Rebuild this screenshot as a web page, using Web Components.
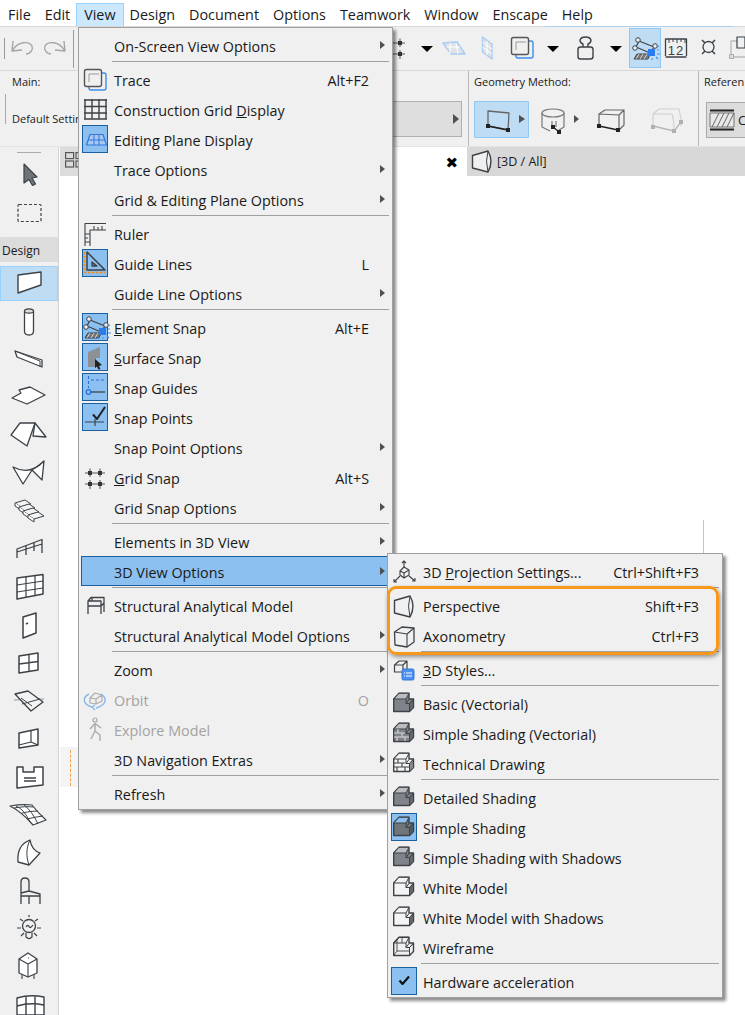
<!DOCTYPE html>
<html lang="en"><head><meta charset="utf-8"><title>View menu</title>
<style>
html,body{margin:0;height:1015px;overflow:hidden;background:#fff;font-family:"Open Sans","Noto Sans",sans-serif;color:#1a1a1a}
</style></head><body>
<app-shell>
  <menu-bar slot="menu">
    <bar-item>File</bar-item><bar-item>Edit</bar-item><bar-item open>View</bar-item><bar-item>Design</bar-item><bar-item>Document</bar-item><bar-item>Options</bar-item><bar-item>Teamwork</bar-item><bar-item>Window</bar-item><bar-item>Enscape</bar-item><bar-item>Help</bar-item>
  </menu-bar>
  <tool-bar slot="tools"></tool-bar>
  <info-bar slot="info"></info-bar>
  <tool-palette slot="palette"></tool-palette>
  <view-area slot="view"></view-area>

  <drop-menu slot="overlay" style="left:78px;top:27px;width:315px;--pl:1px;padding-top:2px">
    <menu-item arrow>On-Screen View Options</menu-item><menu-sep></menu-sep>
    <menu-item icon="trace" short="Alt+F2">Trace</menu-item>
    <menu-item icon="grid">Construction Grid <u>D</u>isplay</menu-item>
    <menu-item icon="plane" checked>Editing Plane Display</menu-item>
    <menu-item arrow>Trace Options</menu-item>
    <menu-item arrow>Grid &amp; Editing Plane Options</menu-item><menu-sep></menu-sep>
    <menu-item icon="ruler">Ruler</menu-item>
    <menu-item icon="guide" checked short="L">Guide Lines</menu-item>
    <menu-item arrow>Guide Line Options</menu-item><menu-sep></menu-sep>
    <menu-item icon="esnap" checked short="Alt+E"><u>E</u>lement Snap</menu-item>
    <menu-item icon="surface" checked><u>S</u>urface Snap</menu-item>
    <menu-item icon="guides" checked>Snap Guides</menu-item>
    <menu-item icon="points" checked>Snap Points</menu-item>
    <menu-item arrow>Snap Point Options</menu-item>
    <menu-item icon="gsnap" short="Alt+S"><u>G</u>rid Snap</menu-item>
    <menu-item arrow>Grid Snap Options</menu-item><menu-sep></menu-sep>
    <menu-item arrow>Elements in 3D View</menu-item>
    <menu-item arrow hl>3D View Options</menu-item><menu-sep></menu-sep>
    <menu-item icon="struct">Structural Analytical Model</menu-item>
    <menu-item arrow>Structural Analytical Model Options</menu-item><menu-sep></menu-sep>
    <menu-item arrow>Zoom</menu-item>
    <menu-item icon="orbit" disabled short="O">Orbit</menu-item>
    <menu-item icon="explore" disabled>Explore Model</menu-item>
    <menu-item arrow>3D Navigation Extras</menu-item><menu-sep></menu-sep>
    <menu-item arrow>Refresh</menu-item>
  </drop-menu>

  <drop-menu slot="overlay" style="left:387px;top:553px;width:336px;--pl:1px;padding-top:2px">
    <menu-item icon="proj" short="Ctrl+Shift+F3">3D <u>P</u>rojection Settings...</menu-item><menu-sep></menu-sep>
    <menu-item icon="persp" short="Shift+F3">Perspective</menu-item>
    <menu-item icon="axo" short="Ctrl+F3">Axonometry</menu-item><menu-sep></menu-sep>
    <menu-item icon="styles"><u>3</u>D Styles...</menu-item><menu-sep></menu-sep>
    <menu-item icon="s703">Basic (Vectorial)</menu-item>
    <menu-item icon="s733">Simple Shading (Vectorial)</menu-item>
    <menu-item icon="s763">Technical Drawing</menu-item><menu-sep></menu-sep>
    <menu-item icon="s797">Detailed Shading</menu-item>
    <menu-item icon="s827" checked>Simple Shading</menu-item>
    <menu-item icon="s857">Simple Shading with Shadows</menu-item>
    <menu-item icon="s887">White Model</menu-item>
    <menu-item icon="s917">White Model with Shadows</menu-item>
    <menu-item icon="s947">Wireframe</menu-item><menu-sep></menu-sep>
    <menu-item icon="hw" checked>Hardware acceleration</menu-item>
  </drop-menu>
  <focus-ring slot="overlay"></focus-ring>
</app-shell>

<script>
const DK='#3c4247';
const g=(dx,dy,c)=>`<g transform="translate(${dx} ${dy})">${c}</g>`;
const traceI=`<rect x="516" y="41" width="17" height="17" rx="2" stroke="#3b8eea" stroke-width="1.4" fill="none"/><rect x="511.5" y="37.5" width="17" height="17" rx="2" fill="#f0f0f0" stroke="#555" stroke-width="1.4"/><path d="M516,50V42H526" stroke="#999" fill="none"/>`;
const snapI=`<path d="M639,41L654,47L650,53L636,47Z" fill="none" stroke-width="1.2"/><circle cx="638" cy="40" r="2.3" fill="#e8eef4"/><circle cx="655" cy="46" r="2.3" fill="#e8eef4"/><circle cx="635" cy="48" r="2.3" fill="#e8eef4"/><path d="M634,59L637,54H650L648,59Z" fill="#777" stroke-width="1"/><path d="M636,59L639,54M640,59L643,54M644,59L647,54" stroke="#eee" stroke-width=".8"/><rect x="648" y="49" width="7" height="7" fill="#2a7cf0" stroke="none"/><path d="M657,50h2M657,54h3M656,57l2,2M652,58v2M648,58l-1,2M657,47l2,-1" stroke="#3f8ef0" stroke-width="1.1"/>`;
const gsnapI=`<path d="M90,468.500V477M90,480V489M100,468.500V477M100,480V489M85,473H95M95,473H105M85,484H105" stroke="#555" stroke-width="1"/><rect x="88" y="471" width="4" height="4" fill="#333" stroke="none"/><rect x="98" y="471" width="4" height="4" fill="#333" stroke="none"/><rect x="88" y="482" width="4" height="4" fill="#333" stroke="none"/><rect x="98" y="482" width="4" height="4" fill="#333" stroke="none"/>`;
const perspI=`<path d="M394.500,600.500L410,596Q416,606 410,617L394.500,613Z" fill="#f0f0f0" stroke-width="1.4"/><path d="M410,596Q407,606 410,617" stroke-width="1"/>`;
const shade=(c,o)=>{const y=c-11;const F=o.F||'#80848a',T=o.T||'#b9bdc1',S=o.S||'#63686d';
 return g(393,y,`<path d="M.7,7L6,1.3H16V7H20.5V15.5L16.500,19.5H.7Z" fill="${F}" stroke-width="1.4"/><path d="M.7,7L6,1.3H16L13,7Z" fill="${T}" stroke-width="1"/><path d="M13,7V11.500M16.500,19.5V11.500H13L16,7.500M16.500,11.500L20.500,7" stroke-width="1"/><path d="M16.500,11.500L20.500,7.500V15.500L16.500,19.500Z" fill="${S}" stroke-width="1"/>${o.x||''}`)};
const bricks=c=>`<path d="M1,11H12M1,15H16M5,7V11M9,11V15M4,15V19M12,15V19" stroke="${c}" stroke-width="1.1" fill="none"/>`;

const menuI={
 trace:[79,g(-427,32,traceI)],
 grid:[109,`<path d="M85,99V119M92,99V119M99,99V119M106,99V119M84,100H107M84,106.500H107M84,113H107M84,119H107" stroke-width="1.4"/>`],
 plane:[139,`<path d="M86.500,145L90,134.500H103L106.500,145Z" fill="#a8c8f0" stroke="#2f78e0" stroke-width="1.2"/><path d="M88,140H105M94,134.500V145M99,134.500V145" stroke="#2f78e0"/>`],
 ruler:[233,`<path d="M85,246V223.500H106M90,246V230H106M94,230V226M98,230V227M102,230V226M85,234H90M85,238H88M85,242H90" stroke-width="1.1"/>`],
 guide:[263,`<path d="M87,252V270H105Z" stroke-width="1.5"/><path d="M92,262V266H97Z" stroke-width="1.3" fill="#5a7fa5"/><path d="M84.500,252V272.500H105" stroke="#f28a1e" stroke-width="1.6" stroke-dasharray="2.500 1.500"/>`],
 esnap:[327,g(-549,279,snapI)],
 surface:[357,`<path d="M88,352L100,347V358H96V367H88Z" fill="#8d9196" stroke="none"/><path d="M95,359L102,365L99,366L100.500,369L98.500,369.500L97,366.500L95,368Z" fill="#222" stroke="none"/>`],
 guides:[387,`<path d="M91,380H105M88.500,376V388" stroke="#2a6fd8" stroke-dasharray="3 2" stroke-width="1.1"/><circle cx="88.500" cy="392" r="2.300" stroke="#2a6fd8" stroke-width="1.2"/><path d="M91,392H105" stroke-width="1.3"/>`],
 points:[417,`<path d="M93,414.500L97,419L105,407" stroke="#222" stroke-width="2"/><path d="M85,422H104M95,419V426" stroke-width="1.2"/>`],
 gsnap:[477,gsnapI],
 struct:[605,`<path d="M88,614V601L91,597.500H104V612M88,601H101V614M88,606H101M104,603L101,606M92,601V597.500" stroke-width="1.3"/>`],
 orbit:[699,`<path d="M90,698L95,693L102,695V701L96,704L90,703ZM90,698L96,699L102,695M96,699V704" stroke="#aaa" stroke-width="1.1"/><path d="M89,694C81,698 84,705 92,707M101,694C108,699 106,705 96,708M95,705L92,707L95,710" stroke="#8ab8ea" stroke-width="1.4"/>`],
 explore:[729,`<circle cx="95" cy="720" r="2" stroke="#aaa" stroke-width="1.2"/><path d="M95,723.500V731L91,739M95,731L100,735V741M90,729L95,723.500L101,728" stroke="#aaa" stroke-width="1.4"/>`],
 proj:[571,`<path d="M400,571L404,567L409,570V575L404,578L400,575ZM400,571L404,573L409,570M404,573V578" stroke-width="1.1"/><path d="M404,567V561M402,563L404,561L406,563M400,576L394,582M394,579V582H397M409,576L415,581M412,581H415V578" stroke-width="1.1"/>`],
 persp:[605,perspI],
 axo:[635,`<path d="M394.500,632L402,627L414,628V642L407,647L395,645Z" fill="#f0f0f0" stroke-width="1.3"/><path d="M394.500,632L407,634L414,628M407,634V647" stroke-width="1.1"/>`],
 styles:[669,`<path d="M394.500,665L399,661H407V672H394.500ZM394.500,665H403L407,661M403,665V672" stroke-width="1.2" fill="#f0f0f0"/><rect x="402" y="669" width="12" height="11" rx="1.500" fill="#4a90f0" stroke="#3176d8"/><path d="M404,673h1M406,673h6M404,676h1M406,676h6" stroke="#fff"/>`],
 s703:[703,shade(703,{})],
 s733:[733,shade(733,{x:bricks('#d8d8d8')})],
 s763:[763,shade(763,{F:'#f4f4f4',T:'#f4f4f4',S:'#888',x:bricks(DK)})],
 s797:[797,shade(797,{})],
 s827:[827,shade(827,{T:'#8cc0f0',F:'#70757a',S:'#54595e'})],
 s857:[857,shade(857,{})],
 s887:[887,shade(887,{F:'#f4f4f4',T:'#f4f4f4',S:'#63686d'})],
 s917:[917,shade(917,{F:'#f4f4f4',T:'#f4f4f4',S:'#63686d'})],
 s947:[947,shade(947,{F:'none',T:'none',S:'none',x:'<path d="M4,4V15L.7,19.500M4,15H16M9,1.300V7" stroke-width=".9"/>'})],
 hw:[981,`<path d="M399.500,980.500L402.500,984L409,976.500" stroke="#111" stroke-width="2.100"/>`]
};

const tread=(x,y)=>`<path d="M${x},${y}L${x+10},${y-3}L${x+16},${y+1}L${x+6},${y+4}Z" fill="#f4f4f4" stroke-width="1"/><path d="M${x},${y}V${y+3}L${x+6},${y+7}V${y+4}" stroke-width="1" fill="#fff"/>`;
const pal=[
 [156,`<path d="M24,164L37,177L32,178L35.500,184L32.500,185.500L29,179.500L24,183Z" fill="#6f7478" stroke-width="1.2"/>`],
 [194,`<rect x="18" y="204.500" width="23" height="17" rx="1" stroke-dasharray="3 2" stroke-width="1.200"/>`],
 [264,`<path d="M18,275L41,272V285L18,293Z" fill="#fff" stroke-width="1.400"/>`],
 [302,`<path d="M24.500,311V331Q24.500,335 29,335Q33.500,335 33.500,331V311" fill="#fff" stroke-width="1.300"/><ellipse cx="29" cy="311" rx="4.500" ry="2.200" fill="#ddd" stroke-width="1.200"/>`],
 [340,`<path d="M15,351L42,360V367L17,357Z" fill="#fff" stroke-width="1.300"/><path d="M15,351L40,361V367" stroke-width="1"/>`],
 [378,`<path d="M12,398L21,393L19,390L30,387L45,395L27,404Z" fill="#fff" stroke-width="1.300"/>`],
 [416,`<path d="M35,423L46,437L33,436Z" fill="#fff" stroke-width="1.300"/><path d="M11,435L20,423H35L27,446Z" fill="#fff" stroke-width="1.300"/>`],
 [454,`<path d="M13,467Q30,476 44,461L42,480L32,470L23,484Z" fill="#fff" stroke-width="1.300"/><path d="M44,461L32,470" stroke-width="1"/>`],
 [492,tread(15,503)+tread(19,507)+tread(23,511)+tread(28,515)],
 [530,`<path d="M17,558V549L42,539.500V553M17,552L42,544M26,555V546M34,551V542" stroke-width="1.300"/>`],
 [568,`<path d="M17,578L43,574.500V594L17,599Z" fill="#fff" stroke-width="1.500"/><path d="M26,577V597M35,576V595M17,585L43,581M17,592L43,588" stroke-width="1.200"/>`],
 [606,`<path d="M23,617L36,613V633L23,638Z" fill="#fff" stroke-width="1.500"/><path d="M26,624L28,623" stroke-width="1.500"/>`],
 [644,`<path d="M19,656L38,653V670L19,673Z" fill="#fff" stroke-width="1.500"/><path d="M29,654.500V671.500M19,664L38,661.500" stroke-width="1.300"/>`],
 [682,`<path d="M14,700L44,699" stroke="#999"/><path d="M15,694L28,691L43,702L31,711Z" fill="#f4f4f4" stroke-width="1.300"/><path d="M22,704L40,699M21,698L32,706" stroke-width="1"/>`],
 [720,`<path d="M19,733L38,729V745L19,748Z" fill="#fff" stroke-width="1.500"/><path d="M31,731V742L19,745M31,742L38,745" stroke-width="1.200"/>`],
 [758,`<path d="M17,767H23V772H34V767H43V785L17,788Z" fill="#fff" stroke-width="1.500"/><path d="M24,778H36M24,781H36" stroke-width="1.300"/>`],
 [796,`<path d="M10,806Q22,804 32,805Q38,813 46,820L33,825Q22,812 10,806Z" fill="#fff" stroke-width="1.200"/><path d="M16,806Q24,809 30,822M24,805Q32,811 38,824M14,808Q26,806 33,807M22,813Q30,811 38,811M27,819Q35,817 43,816" stroke-width="1"/>`],
 [834,`<path d="M30,840C22,843 17,850 18,862L29,865L40,853C34,851 31,846 30,840Z" fill="#fff" stroke-width="1.300"/><path d="M30,840C26,848 26,857 29,865" stroke-width="1"/>`],
 [872,`<path d="M21,904V882Q21,878 25,878Q29,878 29,882V891L40,894V904M21,893L29,891M21,896H40M29,896V904" stroke-width="1.300"/>`],
 [910,`<circle cx="29" cy="926" r="6.500" stroke-width="1.300"/><path d="M26,932.500V937Q29,940 32,937V932.500M26,927Q28,924 29,926.500T33,925M17,928H21M37,928H41M20,919L23,921M38,919L35,921M21,936L24,933M37,936L34,933M29,915V917" stroke-width="1.200"/>`],
 [948,`<path d="M19,959L28,953L37,959V973L28,977L19,973Z" fill="#fff" stroke-width="1.300"/><path d="M19,959L28,964L37,959M28,964V977M22,975V979M34,975V979M28,958H29" stroke-width="1.100"/>`],
 [986,`<path d="M17,998Q30,994 44,997V1015H17ZM26,996V1015M35,996V1015M17,1006Q30,1002 44,1005" stroke-width="1.400" fill="#fff"/>`]
];

function svg(x,y,w,h,c,extra=''){return `<svg xmlns="http://www.w3.org/2000/svg" width="${w}" height="${h}" viewBox="${x} ${y} ${w} ${h}" fill="none" stroke="${DK}" stroke-linejoin="round" stroke-linecap="butt" style="display:block;overflow:visible;${extra}">${c}</svg>`}

class Base extends HTMLElement{constructor(){super();this.attachShadow({mode:'open'})}}
customElements.define('app-shell',class extends Base{connectedCallback(){this.shadowRoot.innerHTML=`<style>
:host{display:grid;position:relative;width:745px;height:1015px;overflow:hidden;grid-template-columns:59px 1fr;grid-template-rows:26px 45px 76px 1fr}
.a{grid-column:1/3}.p{grid-column:1}.v{grid-column:2;min-width:0}
</style><div class="a"><slot name="menu"></slot></div><div class="a"><slot name="tools"></slot></div><div class="a"><slot name="info"></slot></div><div class="p"><slot name="palette"></slot></div><div class="v"><slot name="view"></slot></div><slot name="overlay"></slot>`}});

customElements.define('menu-bar',class extends Base{connectedCallback(){this.shadowRoot.innerHTML=`<style>:host{display:flex;height:26px;padding-left:1px;font-size:14.350px;box-sizing:border-box}</style><slot></slot>`}});
customElements.define('bar-item',class extends Base{connectedCallback(){this.shadowRoot.innerHTML=`<style>:host{display:block;height:23px;margin-top:3px;padding:0 7px;line-height:22px;box-sizing:border-box;border:1px solid transparent;border-bottom:0;margin-left:-1px;margin-right:-1px}
:host([open]){background:#cce8ff;border-color:#99d1ff}</style><slot></slot>`}});

customElements.define('tool-bar',class extends Base{connectedCallback(){
 const arrow=x=>[x-12,x+12,`<path d="M${x-6},46H${x+6}L${x},52Z" fill="#000" stroke="none"/>`];
 const cells=[
  [415-30,415,g(300,-430,gsnapI)],
  arrow(427),
  [439,469,`<path d="M443,43L457,42L465,54H451Z" fill="#dfe3e8" stroke="#a8ccf2" stroke-width="1.400"/><path d="M447,47H460M450,43V54M456,43L458,54" stroke="#fff" stroke-width="1"/>`],
  [469,505,`<path d="M482.500,37L492,44V59L482.500,52Z" fill="#dfe3e8" stroke="#a8ccf2" stroke-width="1.400"/><path d="M487,41V55M482.500,42L492,49M482.500,47L492,54" stroke="#fff"/>`],
  [505,539,traceI],
  arrow(553).map((v,i)=>i==0?539:i==1?567:v),
  [567,603,`<rect x="578" y="47" width="15" height="12" rx="2.500" stroke-width="1.400"/><path d="M583,47V44Q580,43 580,40Q581,37 585.500,37Q590,37 591,40Q591,43 588,44V47" stroke-width="1.400"/>`],
  [603,629,`<path d="M610,46H622L616,52Z" fill="#000" stroke="none"/>`],
  [629,661,snapI,1],
  [661,691,`<path d="M665.500,56V39H686.500V56M665.500,57H686.500" stroke-width="1.300"/><path d="M669,39V43M673,39V42M677,39V43M681,39V42M685,39V43" stroke-width="1"/><text x="676" y="55" text-anchor="middle" font-family="Liberation Sans,sans-serif" font-size="13" letter-spacing="1" fill="${DK}" stroke="none">12</text>`],
  [691,725,`<circle cx="708.500" cy="47" r="5.500" stroke-width="1.300"/><path d="M702,40L705,43M715,40L712,43M702,54L705,51M715,54L712,51" stroke-width="1.500"/>`],
  [725,751,`<rect x="731" y="41" width="20" height="16" stroke="#bbb" stroke-width="1.300"/><rect x="729.500" y="54.500" width="4" height="4" fill="#ddd" stroke="#aaa"/><path d="M737,37H745V48H737Z" fill="#f0f0f0" stroke-width="1.200"/>`]
 ];
 this.shadowRoot.innerHTML=`<style>:host{display:flex;position:relative;height:45px;box-sizing:border-box;background:#f0f0f0;border-top:1px solid #d8d8d8;border-bottom:1px solid #d8d8d8}
 .cell{flex:none;height:43px;box-sizing:border-box;position:relative}
 .on{background:#bfdcf5;box-shadow:inset 0 0 0 1px #90c8f5;margin:1px 0 0;height:40px}
 .l{flex:none}.sp{flex:1}
 .blue{position:absolute;left:545px;width:188px;top:-1px;height:1px;background:#a8d0f0}</style>
 <div class="blue"></div><div class="l">${svg(0,27,80,43,`<path d="M4.500,38V59" stroke="#999"/><path d="M73.500,30V68" stroke="#999"/><g stroke="#a6a6a6" stroke-width="1.400"><path d="M13,41L12,51L22,50M12.500,50.500C18,41 29,41 32,46C33.500,50 30,54 26,54"/><path d="M64,41L65,51L55,50M64.500,50.500C59,41 48,41 45,46C43.500,50 47,54 51,54"/></g>`)}</div><div class="sp"></div>
 ${cells.map(([a,b,c,on])=>`<div class="cell${on?' on':''}" style="width:${b-a}px">${svg(a,on?28:27,b-a,on?40:43,c)}</div>`).join('')}`;
 this.style.marginRight='-6px';
}});

customElements.define('info-bar',class extends Base{connectedCallback(){
 this.shadowRoot.innerHTML=`<style>:host{display:flex;height:76px;box-sizing:border-box;background:#f0f0f0;font-size:11px;overflow:hidden;border-bottom:1px solid #e4e4e4}
 section{flex:none;box-sizing:border-box;height:75px;border-right:1px solid #b8b8b8;display:flex;flex-direction:column;padding-top:2px}
 .lab{height:18px;line-height:18px}
 .s1{width:469px;padding-left:12px;position:relative}
 .row{display:flex;align-items:center;margin-top:9px;height:36px}
 .dflt{white-space:nowrap}
 .sel{margin-left:auto;margin-right:6px;width:200px;height:36px;background:#dedede;border:1px solid #b0b0b0;box-sizing:border-box;display:flex;justify-content:flex-end;align-items:center;padding-right:2px;position:relative;top:1px}
 .tick{width:0;height:0;border:5px solid transparent;border-left:6px solid #505050;border-right:0}
 .bar{position:absolute;left:5px;top:23px;height:30px;width:1px;background:#aaa}
 .s2{width:230px;padding-left:5px}
 .meth{display:flex;margin-top:10px;height:37px}
 .s3{flex:1;padding-left:5px;border:0;min-width:0}
 .ref{margin:11px 0 0 2px;height:36px;background:#dcdcdc;border:1px solid #aaa;border-right:0;box-sizing:border-box;display:flex;align-items:center;gap:4px;padding-left:3px;font-size:13px}
 </style>
 <section class="s1"><div class="lab">Main:</div><div class="bar"></div><div class="row"><span class="dflt">Default Settings</span><div class="sel"><div class="tick"></div></div></div></section>
 <section class="s2"><div class="lab">Geometry Method:</div><div class="meth">${svg(475,100,225,37,`
  <rect x="475.500" y="100.500" width="54" height="36" fill="#bfdcf5" stroke="#90c8f5"/>
  <path d="M489,110L510,112L509,129L489,125Z" stroke="#666" stroke-width="1.300"/><path d="M489,125L509,129" stroke="#222" stroke-width="1.500"/><rect x="487" y="123" width="4" height="4" fill="#222" stroke="none"/><rect x="507" y="127" width="4" height="4" fill="#222" stroke="none"/>
  <path d="M520,114L526,118L520,122Z" fill="#505050" stroke="none"/>
  <ellipse cx="554" cy="112" rx="11" ry="4" stroke="#777" stroke-width="1.200"/><path d="M543,112V126L551,130M565,112V126L560,129M553,126V120M557,120V126" stroke="#777" stroke-width="1.200"/><path d="M554,126L559,130" stroke="#222" stroke-width="1.400"/><rect x="552" y="124" width="4" height="4" fill="#222" stroke="none"/><rect x="558" y="129" width="4" height="4" fill="#222" stroke="none"/>
  <path d="M575,114L580,118L575,122Z" fill="#505050" stroke="none"/>
  <path d="M600,113L620,114L625,109L606,109ZM600,113V125M620,114V129M625,109V124L620,129" stroke="#666" stroke-width="1.200"/><path d="M600,125L619,129" stroke="#222" stroke-width="1.500"/><rect x="598" y="123" width="4" height="4" fill="#222" stroke="none"/><rect x="617" y="127" width="4" height="4" fill="#222" stroke="none"/>
  <path d="M654,113L660,108L680,108L682,118M654,113L673,113Q675,118 675,130M654,113V125M682,118V125" stroke="#d0d0d0" stroke-width="1.200"/><path d="M654,125L675,130L682,121" stroke="#b8b8b8" stroke-width="1.300"/><rect x="652" y="124" width="4" height="4" fill="#b0b0b0" stroke="none"/><rect x="673" y="128" width="4" height="4" fill="#b0b0b0" stroke="none"/><rect x="680" y="119" width="4" height="4" fill="#b0b0b0" stroke="none"/>`)}</div></section>
 <section class="s3"><div class="lab">Referen</div><div class="ref">${svg(711,107,24,22,`<path d="M711,108.500H735M711,127.500H735" stroke="#222" stroke-width="2"/><path d="M711,111H735V125H711Z" fill="#e8e8e8" stroke="#777"/><path d="M713,125L720,111M718,125L725,111M723,125L730,111M728,125L735,111" stroke="#666"/>`)}<span>C</span></div></section>`;
}});

customElements.define('tool-palette',class extends Base{connectedCallback(){
 const cell=([t,c])=>`<div class="c${t==264?' on':''}">${svg(0,t,58,38,c)}</div>`;
 this.shadowRoot.innerHTML=`<style>:host{display:block;box-sizing:border-box;width:59px;height:100%;overflow:hidden;background:#f0f0f0;border-right:1px solid #d2d2d2;padding-top:9px;position:relative;font-size:12px}
 .top{position:absolute;left:17px;top:5px;width:24px;height:1px;background:#aaa}
 .c{height:38px;position:relative}
 .on::before{content:"";position:absolute;left:0;right:0;top:2px;height:35px;background:#bfdcf5;box-shadow:inset 0 0 0 1px #99d1ff}
 .on svg{position:relative}
 .lab{margin:5px 0 2px;height:25px;line-height:27px;padding-left:2px;background:#dcdcdc;border-radius:2px 2px 0 0}</style>
 <div class="top"></div>${pal.slice(0,2).map(cell).join('')}<div class="lab">Design</div>${pal.slice(2).map(cell).join('')}`;
}});

customElements.define('view-area',class extends Base{connectedCallback(){
 this.shadowRoot.innerHTML=`<style>:host{display:block;position:relative;height:100%;background:#fff;font-size:12.500px}
 .tabs{display:flex;height:29px;align-items:stretch}
 .lft{width:19px;background:#dcdcdc;margin-left:1px;box-sizing:border-box;padding:5px 0 0 5px}
 .mid{flex:1;display:flex;justify-content:flex-end;align-items:center;padding:2px 9px 0 0;font-size:15px;font-weight:700;color:#000;font-family:"DejaVu Sans",sans-serif}
 .tab{width:278px;flex:none;background:#d8d8d8;display:flex;align-items:center;padding-left:5px;box-sizing:border-box;gap:4px;margin-right:0}
 .dash{position:absolute;left:1px;top:600px;width:19px;height:40px;background:#f4f4f4}
 .dash i{position:absolute;left:10px;top:3px;height:36px;border-left:1px dashed #f5a14a}
 .line{position:absolute;left:644px;top:373px;width:1px;height:34px;background:#a8c8f0}</style>
 <div class="tabs"><div class="lft"><svg width="14" height="16" viewBox="0 0 14 16" fill="none" stroke="#555" stroke-width="1.200" style="display:block"><rect x=".6" y=".6" width="8" height="6"/><rect x=".6" y="9" width="8" height="6"/><rect x="11" y=".6" width="8" height="6"/><rect x="11" y="9" width="8" height="6"/></svg></div><div class="mid">✖</div><div class="tab">${svg(472,152,21,21,g(78,-444,perspI))}<span>[3D / All]</span></div></div>
 <div class="dash"><i></i></div><div class="line"></div>`;
}});

customElements.define('drop-menu',class extends Base{connectedCallback(){
 this.shadowRoot.innerHTML=`<style>:host{display:block;position:absolute;box-sizing:border-box;background:#f0f0f0;border:1px solid #a0a0a0;box-shadow:3px 3px 3px rgba(0,0,0,.45);padding-bottom:1px;font-size:14.350px}</style><slot></slot>`;
}});
customElements.define('menu-sep',class extends Base{connectedCallback(){
 this.shadowRoot.innerHTML=`<style>:host{display:block;height:4px;box-sizing:border-box;padding-top:1px;margin:0 3px 0 33px}div{height:1px;background:#a0a0a0}</style><div></div>`;
}});
customElements.define('menu-item',class extends Base{connectedCallback(){
 const n=this.getAttribute('icon'),s=this.getAttribute('short');
 const ic=n&&menuI[n];
 const left=this.parentElement.style.left==='78px'?82:391;
 this.shadowRoot.innerHTML=`<style>:host{display:grid;grid-template-columns:26px 1fr auto 21px;column-gap:0;height:30px;align-items:center;margin:0 2px;padding-left:var(--pl,0);box-sizing:border-box;white-space:nowrap;color:#1a1a1a}
 :host([hl]){background:#8cc0f0;box-shadow:inset 0 0 0 1px #1a5f9e}
 :host([disabled]){color:#a3a3a3}
 .i{width:26px;height:28px;box-sizing:border-box}
 :host([checked]) .i{background:#8cc0f0;box-shadow:inset 0 0 0 1px #1a5f9e}
 .t{padding-left:6px;position:relative;top:1px;min-width:0}
 .s{position:relative;top:1px}
 .a{justify-self:end;margin-right:5px;width:0;height:0;border:4.500px solid transparent;border-left:5px solid #505050;border-right:0}</style>
 <div class="i">${ic?svg(left,ic[0]-14,26,28,ic[1]):''}</div><div class="t"><slot></slot></div><div class="s">${s||''}</div>${this.hasAttribute('arrow')?'<div class="a"></div>':'<div></div>'}`;
}});
customElements.define('focus-ring',class extends Base{connectedCallback(){
 this.shadowRoot.innerHTML=`<style>:host{display:block;position:absolute;left:387px;top:586px;width:332px;height:69px;box-sizing:border-box;border:3px solid #f7981d;border-radius:9px;box-shadow:1px 2px 4px rgba(0,0,0,.4)}</style>`;
}});
</script>
</body></html>
